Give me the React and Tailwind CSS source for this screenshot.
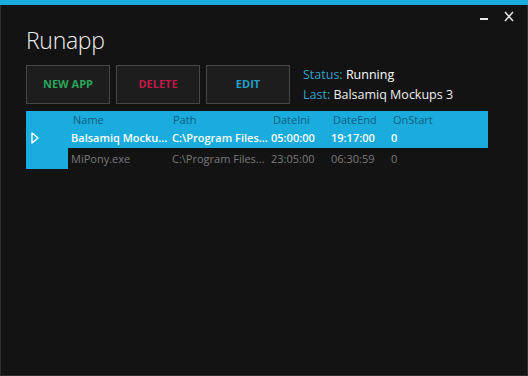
import React from 'react';

const rows = [
    { name: 'Balsamiq Mocku...', path: 'C:\\Program Files...', ini: '05:00:00', end: '19:17:00', onStart: '0', selected: true },
    { name: 'MiPony.exe', path: 'C:\\Program Files...', ini: '23:05:00', end: '06:30:59', onStart: '0', selected: false },
];

const cols = 'grid grid-cols-[101px_100px_59px_60px_1fr]';

const App = () => {
    return (
        <div className="w-[528px] h-[376px] bg-[#131313] flex flex-col overflow-hidden" style={{ fontFamily: '"Open Sans", "Noto Sans", sans-serif' }}>
            {/* top accent */}
            <div className="h-[5px] bg-[#19acdc] shrink-0" />

            <div className="relative flex-1 border-x border-b border-[#2e2e2e] px-[25px]">
                {/* window controls */}
                <div className="absolute top-[6px] right-[13px] flex items-start gap-[16px]">
                    <svg width="8" height="11" viewBox="0 0 8 11">
                        <rect x="0" y="7" width="8" height="2" fill="#e8e8e8" />
                    </svg>
                    <svg width="10" height="11" viewBox="0 0 10 11">
                        <path d="M1 1 L9 10 M9 1 L1 10" stroke="#e8e8e8" strokeWidth="1.5" />
                    </svg>
                </div>

                {/* title */}
                <div className="mt-[16px] h-[38px] text-[23px] leading-[38px] font-light text-[#f0f0f0] tracking-[-0.3px]">Runapp</div>

                {/* actions + status */}
                <div className="mt-[6px] flex items-center">
                    <button className="w-[84px] h-[39px] bg-[#1d1d1d] border border-[#474747] text-[11px] font-bold text-[#2aa65a]">NEW APP</button>
                    <button className="ml-[6px] w-[84px] h-[39px] bg-[#1d1d1d] border border-[#474747] text-[11px] font-bold text-[#c21a48]">DELETE</button>
                    <button className="ml-[6px] w-[84px] h-[39px] bg-[#1d1d1d] border border-[#474747] text-[11px] font-bold text-[#22a0c8]">EDIT</button>
                    <div className="ml-[13px] flex flex-col gap-[2px] text-[12.5px] leading-[18px]">
                        <div><span className="text-[#35a3c8]">Status:</span> <span className="text-white">Running</span></div>
                        <div><span className="text-[#35a3c8]">Last:</span> <span className="text-[#eeeeee]">Balsamiq Mockups 3</span></div>
                    </div>
                </div>

                {/* table */}
                <div className="mt-[7px] flex w-[462px] text-[11px]">
                    <div className="w-[42px] h-[58px] bg-[#19acdc] flex flex-col">
                        <div className="h-[17px]" />
                        <div className="h-[20px] flex items-center pl-[5px]">
                            <svg width="8" height="12" viewBox="0 0 8 12">
                                <path d="M1 1 L7 6 L1 11 Z" fill="none" stroke="#ffffff" strokeWidth="1.4" strokeLinejoin="round" />
                            </svg>
                        </div>
                    </div>
                    <div className="flex-1">
                        <div className={`${cols} h-[17px] leading-[17px] bg-[#19acdc] text-[#0d5c86]`}>
                            <div className="pl-[5px]">Name</div>
                            <div className="pl-[4px]">Path</div>
                            <div className="pl-[4px]">DateIni</div>
                            <div className="pl-[5px]">DateEnd</div>
                            <div className="pl-[5px]">OnStart</div>
                        </div>
                        {rows.map((r, i) => (
                            <div
                                key={i}
                                className={`${cols} ${r.selected ? 'h-[20px] leading-[20px] bg-[#19acdc] text-white font-semibold' : 'h-[21px] leading-[21px] text-[#7a7a7a]'}`}
                            >
                                <div className="pl-[3px] whitespace-nowrap">{r.name}</div>
                                <div className="pl-[3px] whitespace-nowrap">{r.path}</div>
                                <div className="pl-[2px]">{r.ini}</div>
                                <div className="pl-[3px]">{r.end}</div>
                                <div className="pl-[3px]">{r.onStart}</div>
                            </div>
                        ))}
                    </div>
                </div>
            </div>
        </div>
    );
};

export default App;
